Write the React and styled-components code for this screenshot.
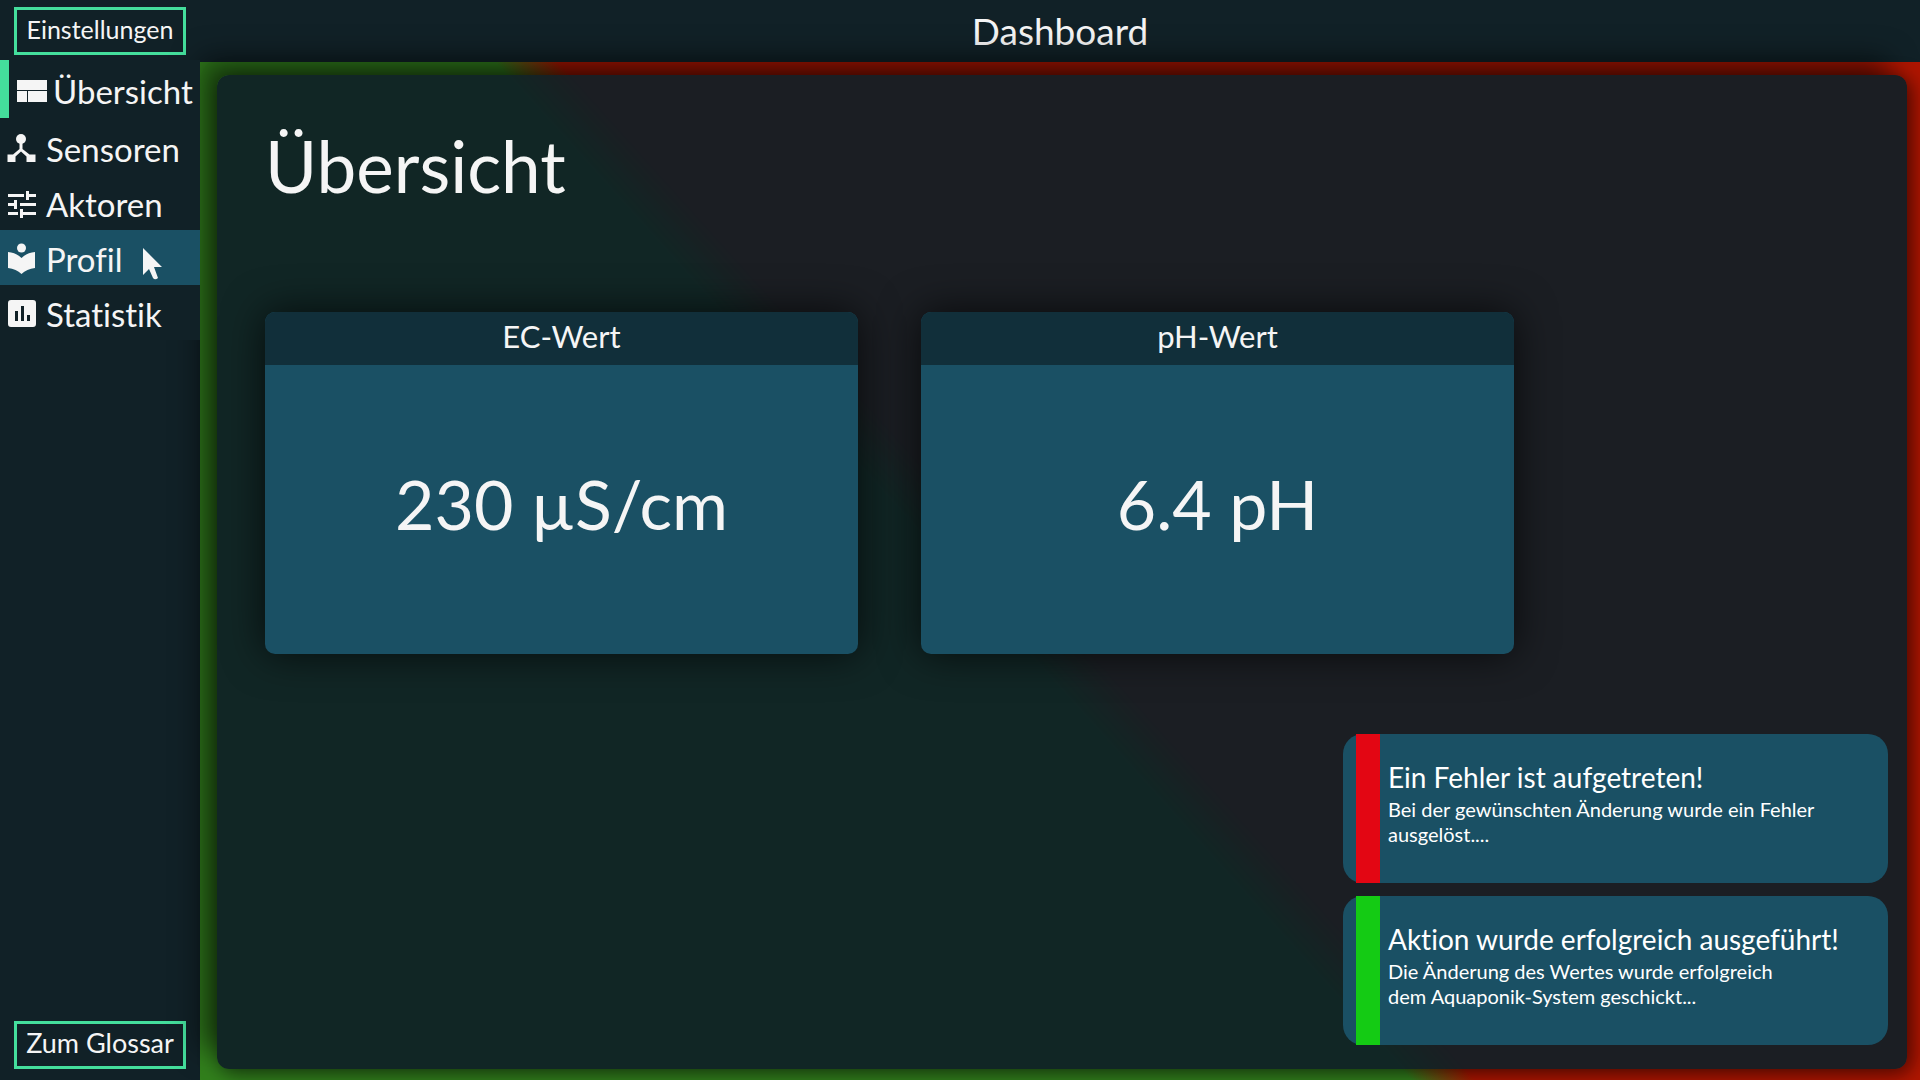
import React from 'react';
import styled, { createGlobalStyle } from 'styled-components';

const GlobalStyle = createGlobalStyle`
  *, *::before, *::after { box-sizing: border-box; }
  body {
    margin: 0;
    font-family: Lato, 'Noto Sans', sans-serif;
    font-variant-ligatures: none;
    color: #f5f5f5;
  }
  h1, h2, p, ul { margin: 0; padding: 0; font-weight: 400; }
`;

const Page = styled.div`
  display: grid;
  grid-template-columns: 200px 1fr;
  grid-template-rows: 62px 1fr;
  min-height: 100vh;
  background: linear-gradient(48deg, #32801d 48.8%, #b01600 51%);
`;

const Sidebar = styled.aside`
  grid-row: 1 / 3;
  display: flex;
  flex-direction: column;
  background: #112127;
`;

const OutlineButton = styled.button`
  height: 48px;
  margin: ${(p) => p.$margin};
  padding: 0 0 4px;
  border: 3px solid #44de9c;
  background: transparent;
  color: inherit;
  font-family: inherit;
  font-size: ${(p) => p.$size}px;
  line-height: 36px;
  white-space: nowrap;
  cursor: pointer;
`;

const NavList = styled.ul`
  position: relative;
  z-index: 1;
  list-style: none;
  background: #112127;
`;

const NavLink = styled.a`
  display: flex;
  align-items: center;
  gap: ${(p) => (p.$active ? 5 : 9)}px;
  height: ${(p) => (p.$active ? 58 : 55)}px;
  margin-bottom: ${(p) => (p.$active ? 2 : 0)}px;
  padding-top: ${(p) => (p.$active ? 4 : 2)}px;
  padding-left: ${(p) => (p.$active ? 7 : 6)}px;
  border-left: ${(p) => (p.$active ? '9px solid #44de9c' : '0')};
  background: ${(p) => (p.$hovered ? '#1a5064' : 'transparent')};
  color: inherit;
  font-size: 33px;
  line-height: 40px;
  text-decoration: none;
  white-space: nowrap;

  svg { flex: none; fill: currentColor; }
`;

const Pointer = styled.svg`
  margin: 10px 0 0 12px;
`;

const Spacer = styled.div`
  flex: 1;
`;

const TopBar = styled.header`
  display: flex;
  align-items: center;
  justify-content: center;
  background: #112127;
  font-size: 37px;
  line-height: 44px;
`;

const Main = styled.main`
  display: flex;
  padding: 13px 13px 11px 17px;
`;

const Panel = styled.section`
  position: relative;
  flex: 1;
  padding: 48px;
  border-radius: 12px;
  background: rgba(15, 31, 38, 0.93);
  box-shadow:
    -18px -18px 28px rgba(0, 0, 0, 0.5),
    4px 4px 20px rgba(0, 0, 0, 0.6);
`;

const Title = styled.h1`
  font-size: 71px;
  line-height: 86px;
`;

const Cards = styled.div`
  display: flex;
  gap: 63px;
  margin-top: 103px;
`;

const Card = styled.article`
  display: flex;
  flex-direction: column;
  flex: 0 1 593px;
  height: 342px;
  border-radius: 10px;
  overflow: hidden;
  background: #1a5064;
  box-shadow: 0 0 40px rgba(0, 0, 0, 0.7);
`;

const CardTitle = styled.h2`
  height: 53px;
  background: #112f3a;
  font-size: 31px;
  line-height: 48px;
  text-align: center;
`;

const Reading = styled.p`
  flex: 1;
  display: flex;
  align-items: center;
  justify-content: center;
  padding-bottom: 12px;
  font-size: 68px;
  line-height: 84px;
`;

const Toasts = styled.div`
  position: absolute;
  right: 19px;
  bottom: 24px;
  display: flex;
  flex-direction: column;
  gap: 13px;
  width: 545px;
`;

const Toast = styled.div`
  display: flex;
  height: 149px;
  padding-left: 13px;
  border-radius: 20px;
  background: #1a5064;
  color: #fff;
`;

const Stripe = styled.span`
  width: 24px;
  background: ${(p) => p.$color};
`;

const ToastText = styled.div`
  padding: 24px 0 0 8px;
`;

const ToastTitle = styled.p`
  font-size: 28px;
  line-height: 39px;
`;

const ToastBody = styled.p`
  font-size: 20px;
  line-height: 25px;
`;

function OverviewIcon() {
  return (
    <svg width="32" height="22" viewBox="0 0 32 22" aria-hidden="true">
      <path d="M1 0h30v10H1zM1 11h10v11H1zM12 11h19v11H12z" />
    </svg>
  );
}

function SensorIcon() {
  return (
    <svg width="31" height="29" viewBox="0 0 31 29" aria-hidden="true">
      <circle cx="15" cy="5" r="5" />
      <path d="M13.500 9h3v6l7 5.500h6V28h-9v-5.500L15 17.500l-5.500 5V28h-8v-7.500h5.500l6.500-5.500z" />
    </svg>
  );
}

function TuneIcon() {
  return (
    <svg width="31" height="28" viewBox="0 0 31 28" aria-hidden="true">
      <path d="M2 4h16v3H2zM20 1h3v3h7v3h-7v3h-3zM2 13h6v-3h3v9H8v-3H2zM14 13h16v3H14zM2 22h10v3H2zM14 19h3v3h13v3H17v3h-3z" />
    </svg>
  );
}

function ReaderIcon() {
  return (
    <svg width="31" height="31" viewBox="0 0 31 31" aria-hidden="true">
      <circle cx="15.500" cy="5" r="4.500" />
      <path d="M15.500 15C12 11.500 7.500 9.500 2 9v16c5.500.5 10 2.500 13.500 6 3.500-3.500 8-5.500 13.500-6V9c-5.500.5-10 2.500-13.500 6z" />
    </svg>
  );
}

function StatsIcon() {
  return (
    <svg width="31" height="28" viewBox="0 0 31 28" aria-hidden="true">
      <path
        fillRule="evenodd"
        d="M5 0h22a3 3 0 0 1 3 3v21a3 3 0 0 1-3 3H5a3 3 0 0 1-3-3V3a3 3 0 0 1 3-3zM9 11v10h3V11zM15 6v15h3V6zM21 15v6h3v-6z"
      />
    </svg>
  );
}

const NAV = [
  { label: 'Übersicht', icon: OverviewIcon, active: true },
  { label: 'Sensoren', icon: SensorIcon },
  { label: 'Aktoren', icon: TuneIcon },
  { label: 'Profil', icon: ReaderIcon, hovered: true },
  { label: 'Statistik', icon: StatsIcon },
];

const READINGS = [
  { title: 'EC-Wert', value: '230 µS/cm' },
  { title: 'pH-Wert', value: '6.4 pH' },
];

const TOASTS = [
  {
    color: '#e30613',
    title: 'Ein Fehler ist aufgetreten!',
    lines: ['Bei der gewünschten Änderung wurde ein Fehler', 'ausgelöst....'],
  },
  {
    color: '#14cb14',
    title: 'Aktion wurde erfolgreich ausgeführt!',
    lines: ['Die Änderung des Wertes wurde erfolgreich', 'dem Aquaponik-System geschickt...'],
  },
];

export default function App() {
  return (
    <>
      <GlobalStyle />
      <Page>
        <Sidebar>
          <OutlineButton type="button" $margin="7px 14px 5px" $size={25}>Einstellungen</OutlineButton>
          <nav>
            <NavList>
              {NAV.map(({ label, icon: Icon, active, hovered }) => (
                <li key={label}>
                  <NavLink href="#" $active={active} $hovered={hovered} aria-current={active ? 'page' : undefined}>
                    <Icon />
                    <span>{label}</span>
                    {hovered && (
                      <Pointer width="20" height="32" viewBox="0 0 20 32" aria-hidden="true">
                        <path d="M0 0v27l6-6 4 9q2 2.500 5 0l-4-11h8z" />
                      </Pointer>
                    )}
                  </NavLink>
                </li>
              ))}
            </NavList>
          </nav>
          <Spacer />
          <OutlineButton type="button" $margin="0 14px 11px" $size={27}>Zum Glossar</OutlineButton>
        </Sidebar>
        <TopBar>Dashboard</TopBar>
        <Main>
          <Panel>
            <Title>Übersicht</Title>
            <Cards>
              {READINGS.map(({ title, value }) => (
                <Card key={title}>
                  <CardTitle>{title}</CardTitle>
                  <Reading>{value}</Reading>
                </Card>
              ))}
            </Cards>
            <Toasts role="status">
              {TOASTS.map(({ color, title, lines }) => (
                <Toast key={title}>
                  <Stripe $color={color} />
                  <ToastText>
                    <ToastTitle>{title}</ToastTitle>
                    {lines.map((line) => <ToastBody key={line}>{line}</ToastBody>)}
                  </ToastText>
                </Toast>
              ))}
            </Toasts>
          </Panel>
        </Main>
      </Page>
    </>
  );
}
